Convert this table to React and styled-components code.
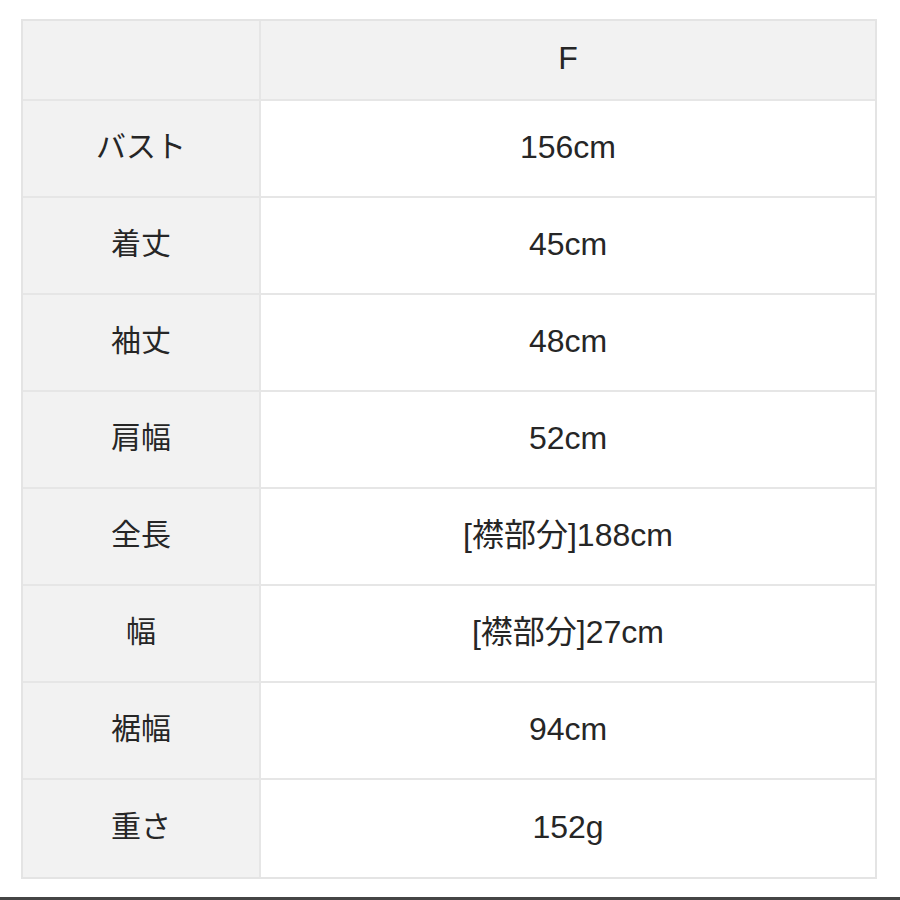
import React from "react";
import styled, { createGlobalStyle } from "styled-components";

const Global = createGlobalStyle`
  html, body { margin: 0; padding: 0; background: #ffffff; }
  body { font-family: "Liberation Sans", "Noto Sans CJK JP", sans-serif; color: #222; }
`;

const Page = styled.div`
  width: 900px;
  height: 900px;
  padding-top: 19px;
  box-sizing: border-box;
  display: flex;
  flex-direction: column;
`;

const Table = styled.div`
  margin: 0 23px 0 21px;
  display: grid;
  grid-template-columns: 238px 1fr;
  grid-template-rows: 80px repeat(8, 97px);
  border: 2px solid #e4e4e4;
  box-sizing: border-box;
  background: #ffffff;
`;

const Cell = styled.div`
  display: flex;
  align-items: center;
  justify-content: center;
  padding-bottom: 4px;
  box-sizing: border-box;
  background: ${(p) => (p.$shade ? "#f2f2f2" : "#ffffff")};
  border-right: ${(p) => (p.$label ? "2px solid #e6e6e6" : "none")};
  border-bottom: ${(p) => (p.$last ? "none" : "2px solid #e6e6e6")};
  font-family: "Liberation Sans", "Noto Sans CJK JP", sans-serif;
  font-size: ${(p) => (p.$label ? "30px" : "32px")};
  font-weight: 400;
  line-height: 1;
  color: #262626;
`;

const Rule = styled.div`
  margin-top: auto;
  height: 3px;
  background: #454545;
`;

const rows = [
  ["バスト", "156cm"],
  ["着丈", "45cm"],
  ["袖丈", "48cm"],
  ["肩幅", "52cm"],
  ["全長", "[襟部分]188cm"],
  ["幅", "[襟部分]27cm"],
  ["裾幅", "94cm"],
  ["重さ", "152g"],
];

export default function App() {
  return (
    <>
      <Global />
      <Page>
        <Table>
          <Cell $shade $label />
          <Cell $shade>F</Cell>
          {rows.map(([k, v], i) => (
            <React.Fragment key={k}>
              <Cell $shade $label $last={i === rows.length - 1}>{k}</Cell>
              <Cell $last={i === rows.length - 1}>{v}</Cell>
            </React.Fragment>
          ))}
        </Table>
        <Rule />
      </Page>
    </>
  );
}
